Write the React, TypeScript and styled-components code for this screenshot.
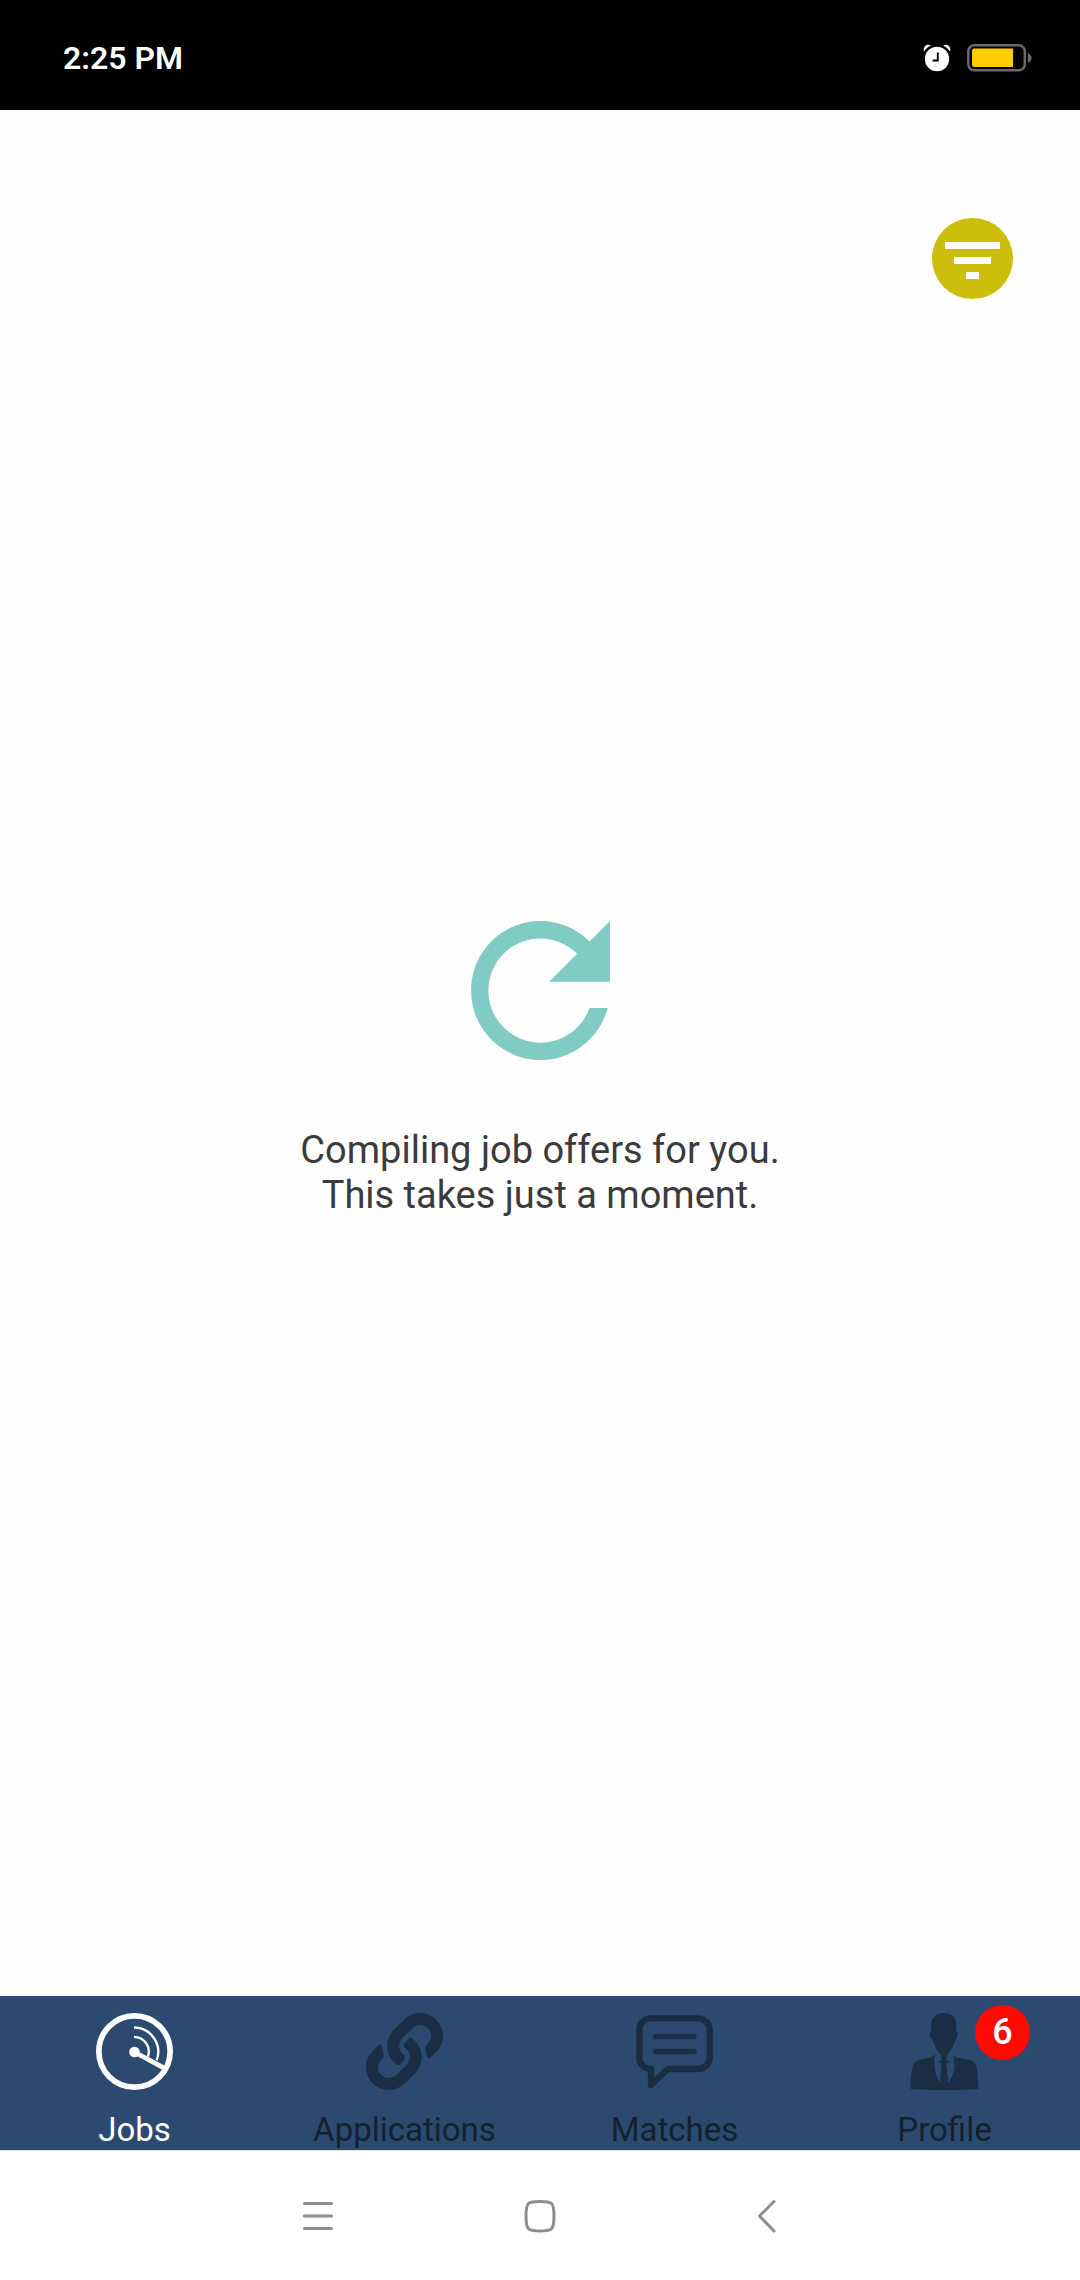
import React, { ReactNode } from "react";
import styled, { createGlobalStyle } from "styled-components";
import { FaLink } from "react-icons/fa";

const GlobalStyle = createGlobalStyle`
  *, *::before, *::after { box-sizing: border-box; }
  body {
    margin: 0;
    background: #fefefe;
    font-family: Roboto, "Liberation Sans", sans-serif;
  }
  button { font-family: inherit; }
`;

const Screen = styled.div`
  min-height: 100vh;
  display: flex;
  flex-direction: column;
`;

const StatusBar = styled.header`
  height: 110px;
  padding: 6px 48px 0 63px;
  display: flex;
  align-items: center;
  justify-content: space-between;
  background: #000;
  color: #fff;
`;

const Clock = styled.time`
  font-size: 32px;
  line-height: 38px;
  font-weight: 600;
`;

const StatusIcons = styled.div`
  display: flex;
  align-items: center;
  gap: 16px;
`;

const Main = styled.main`
  flex: 1;
  display: flex;
  flex-direction: column;
`;

const Toolbar = styled.div`
  display: flex;
  justify-content: flex-end;
  padding: 108px 67px 0;
`;

const FilterButton = styled.button`
  width: 81px;
  height: 81px;
  padding: 0;
  border: 0;
  border-radius: 50%;
  background: #ccbe0b;
  cursor: pointer;

  svg { display: block; }
`;

const Loading = styled.section`
  flex: 1;
  display: flex;
  flex-direction: column;
  align-items: center;
  justify-content: center;
  gap: 68px;
  padding-bottom: 157px;
`;

const Message = styled.p`
  margin: 0;
  font-size: 38px;
  line-height: 45px;
  text-align: center;
  color: #3b3b3b;
`;

const TabBar = styled.nav`
  display: grid;
  grid-template-columns: repeat(4, 1fr);
  background: #2c4a6f;
`;

const Tab = styled.button<{ $active?: boolean }>`
  display: flex;
  flex-direction: column;
  align-items: center;
  gap: 20px;
  padding: 17px 1px 1px 0;
  border: 0;
  background: none;
  color: ${(p) => (p.$active ? "#fff" : "#1a2d45")};
  cursor: pointer;
`;

const TabIcon = styled.span`
  position: relative;
  width: 77px;
  height: 77px;

  svg { display: block; width: 100%; height: 100%; }
`;

const TabLabel = styled.span<{ $active?: boolean }>`
  font-size: 33px;
  line-height: 39px;
  color: ${(p) => (p.$active ? "#fff" : "#14202e")};
`;

const Badge = styled.span`
  position: absolute;
  top: -8px;
  left: 69px;
  width: 55px;
  height: 55px;
  border-radius: 50%;
  background: #ff0a00;
  color: #fff;
  font-size: 36px;
  line-height: 54px;
  font-weight: 500;
  text-align: center;
`;

const SystemBar = styled.nav`
  height: 130px;
  display: flex;
  justify-content: center;
  align-items: stretch;
  border-top: 1px solid #e2e2e2;
  background: #fff;
`;

const SystemButton = styled.button`
  width: 222px;
  padding: 0;
  display: flex;
  align-items: center;
  justify-content: center;
  border: 0;
  background: none;
  color: #8e8e8e;
  cursor: pointer;
`;

const AlarmIcon = () => (
  <svg width="28" height="28" viewBox="0 0 28 28" role="img" aria-label="Alarm set">
    <circle cx="14" cy="15" r="12.2" fill="#fff" />
    <path
      d="M1 7.600C-.6 3.200 3.600-.6 7.800 1.400C5 2.700 2.800 4.900 1 7.600ZM27 7.600C28.600 3.200 24.400-.6 20.200 1.400C23 2.700 25.200 4.900 27 7.600Z"
      fill="#fff"
    />
    <path d="M14.800 8.500v8H9.600" fill="none" stroke="#000" strokeWidth="1.900" />
  </svg>
);

const BatteryIcon = () => (
  <svg width="65" height="28" viewBox="0 0 65 28" role="img" aria-label="Battery">
    <rect x="1.300" y="1.300" width="56.500" height="25" rx="6" fill="none" stroke="#6a6a6a" strokeWidth="2.500" />
    <path d="M60.800 9c5 2.200 5 7.600 0 9.800z" fill="#6a6a6a" />
    <path d="M7.500 4.500H46v18.600H7.500a2.500 2.500 0 0 1-2.500-2.500V7a2.500 2.500 0 0 1 2.500-2.500z" fill="#ffcc00" />
  </svg>
);

const FilterIcon = () => (
  <svg width="81" height="81" viewBox="0 0 81 81" fill="#fff" aria-hidden="true">
    <rect x="13" y="24" width="55" height="7" />
    <rect x="22" y="39" width="37" height="7" />
    <rect x="34" y="54" width="13" height="7" />
  </svg>
);

const RefreshIcon = () => (
  <svg width="139" height="139" viewBox="4 4 16 16" fill="#80cbc4" aria-hidden="true">
    <path d="M17.65 6.35C16.2 4.9 14.21 4 12 4c-4.42 0-7.99 3.58-7.99 8s3.57 8 7.99 8c3.73 0 6.840-2.550 7.730-6h-2.080c-.82 2.330-3.040 4-5.650 4-3.310 0-6-2.690-6-6s2.690-6 6-6c1.660 0 3.140.69 4.220 1.780L13 11h7V4l-2.350 2.350z" />
  </svg>
);

const RadarIcon = () => (
  <svg viewBox="0 0 231 231" fill="none" stroke="currentColor" aria-hidden="true">
    <circle cx="115.500" cy="115.500" r="107" strokeWidth="17" />
    <circle cx="115.500" cy="117" r="16" fill="currentColor" stroke="none" />
    <path d="M115 117L206 166" strokeWidth="14" />
    <path d="M114 43.500A73 73 0 0 1 182 142" strokeWidth="7" />
    <path d="M114 71.500A45 45 0 0 1 156 131" strokeWidth="7" />
  </svg>
);

const ChatIcon = () => (
  <svg
    viewBox="0 0 231 231"
    fill="none"
    stroke="currentColor"
    strokeWidth="19"
    strokeLinecap="round"
    strokeLinejoin="round"
    aria-hidden="true"
  >
    <path d="M45 168V216L95 168H187A34 34 0 0 0 221 134V50A34 34 0 0 0 187 16H44A34 34 0 0 0 10 50V134A34 34 0 0 0 45 168Z" />
    <path d="M58 71H174M58 115.500H174" strokeWidth="16" />
  </svg>
);

const BusinessmanIcon = () => (
  <svg viewBox="0 0 231 231" fill="currentColor" aria-hidden="true">
    <path d="M114 0C136 0 151 14 151 36L150 57C157 56 156 63 154 70C153 77 150 81 147 81C144 95 140 104 134 112C130 121 124 126 114 126C104 126 98 121 94 112C88 104 84 95 81 81C78 81 74 77 72 70C70 63 71 56 76 57L75 36C75 14 91 0 114 0Z" />
    <path d="M88 122C84 140 83 160 88 177C92 191 97 201 103 209L107 150L98 151L104 129L113 127L124 128L131 151L120 148L126 209C134 199 140 189 144 172C147 156 145 138 138 122C144 134 157 134 173 137C202 140 212 148 214 177L217 227C184 232 47 232 13 227C13 204 14 190 18 170C21 146 34 140 58 136C74 134 82 132 88 122Z" />
    <path d="M105 126H123L125 146L119 149L126 209L114 216L102 209L109 149L103 146Z" />
    <path d="M103 128L94 151L108 140ZM124 128L134 150L120 140Z" fill="#2c4a6f" />
  </svg>
);

const MenuIcon = () => (
  <svg width="40" height="40" viewBox="0 0 40 40" stroke="currentColor" strokeWidth="3" strokeLinecap="round" aria-hidden="true">
    <path d="M6.500 7.500H33.500M6.500 20H33.500M6.500 32.500H33.500" />
  </svg>
);

const HomeIcon = () => (
  <svg width="40" height="40" viewBox="0 0 40 40" fill="none" stroke="currentColor" strokeWidth="3" aria-hidden="true">
    <path d="M20 5.500C32 5.500 34 6 34 20C34 34 32 35 20 35C8 35 6 34 6 20C6 6 8 5.500 20 5.500Z" />
  </svg>
);

const BackIcon = () => (
  <svg
    width="40"
    height="40"
    viewBox="0 0 40 40"
    fill="none"
    stroke="currentColor"
    strokeWidth="3"
    strokeLinecap="round"
    strokeLinejoin="round"
    aria-hidden="true"
  >
    <path d="M32 5.500L17.500 20L32 35" />
  </svg>
);

interface TabItem {
  label: string;
  icon: ReactNode;
  badge?: number;
}

const tabs: TabItem[] = [
  { label: "Jobs", icon: <RadarIcon /> },
  { label: "Applications", icon: <FaLink aria-hidden="true" /> },
  { label: "Matches", icon: <ChatIcon /> },
  { label: "Profile", icon: <BusinessmanIcon />, badge: 6 },
];

const activeTab = "Jobs";

export default function App() {
  return (
    <>
      <GlobalStyle />
      <Screen>
        <StatusBar>
          <Clock dateTime="14:25">2:25 PM</Clock>
          <StatusIcons>
            <AlarmIcon />
            <BatteryIcon />
          </StatusIcons>
        </StatusBar>

        <Main>
          <Toolbar>
            <FilterButton type="button" aria-label="Filter jobs">
              <FilterIcon />
            </FilterButton>
          </Toolbar>
          <Loading role="status">
            <RefreshIcon />
            <Message>
              Compiling job offers for you.
              <br />
              This takes just a moment.
            </Message>
          </Loading>
        </Main>

        <TabBar aria-label="Sections">
          {tabs.map(({ label, icon, badge }) => {
            const active = label === activeTab;
            return (
              <Tab key={label} type="button" $active={active} aria-current={active ? "page" : undefined}>
                <TabIcon>
                  {icon}
                  {badge !== undefined && <Badge>{badge}</Badge>}
                </TabIcon>
                <TabLabel $active={active}>{label}</TabLabel>
              </Tab>
            );
          })}
        </TabBar>

        <SystemBar aria-label="System">
          <SystemButton type="button" aria-label="Recent apps">
            <MenuIcon />
          </SystemButton>
          <SystemButton type="button" aria-label="Home">
            <HomeIcon />
          </SystemButton>
          <SystemButton type="button" aria-label="Back">
            <BackIcon />
          </SystemButton>
        </SystemBar>
      </Screen>
    </>
  );
}
